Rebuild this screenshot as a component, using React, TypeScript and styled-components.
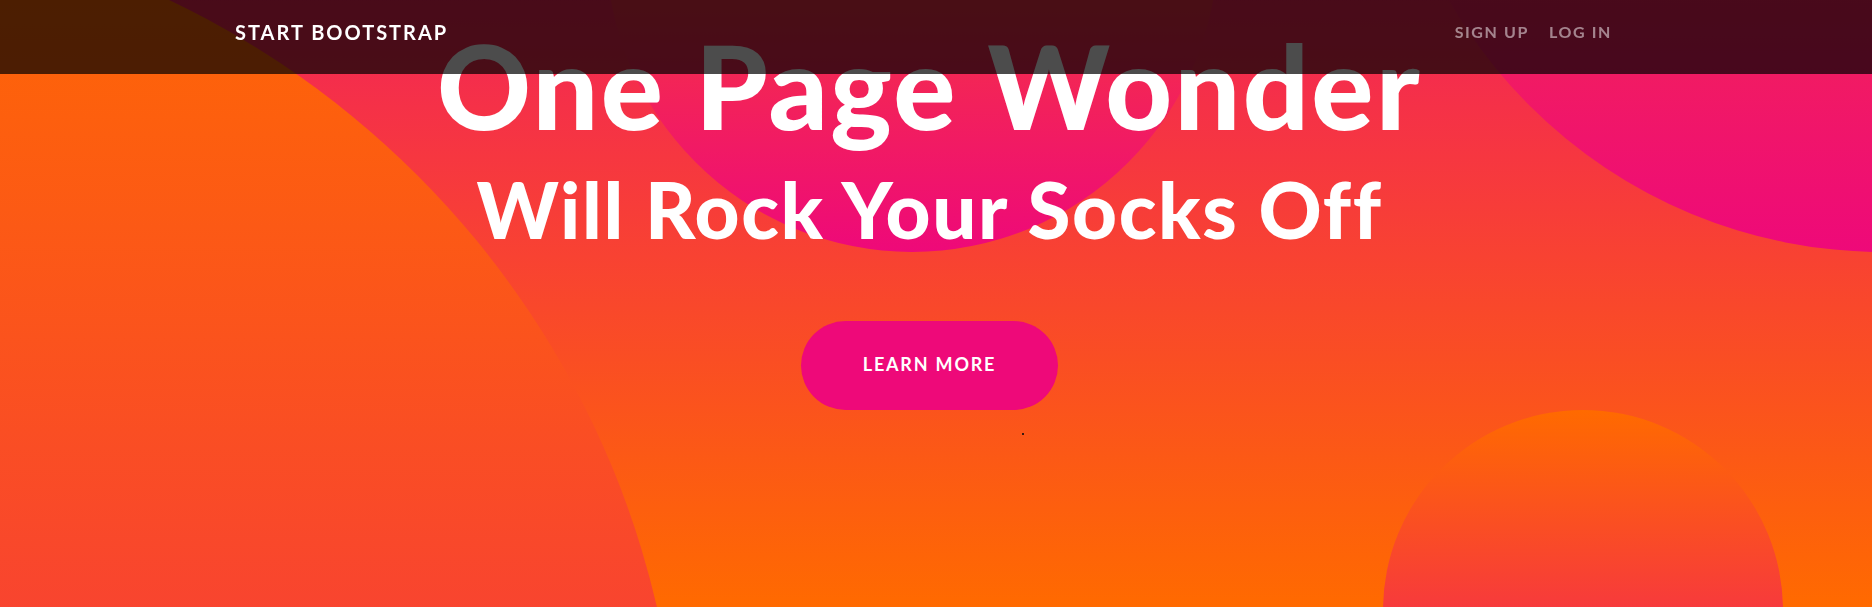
import React from "react";
import styled, { createGlobalStyle } from "styled-components";

const GlobalStyle = createGlobalStyle`
  * { box-sizing: border-box; }
  html, body { margin: 0; padding: 0; background: #fff; }
  body { font-family: Lato, "Liberation Sans", sans-serif; }
`;

const NavBar = styled.nav`
  position: fixed;
  top: 0;
  left: 0;
  right: 0;
  z-index: 10;
  height: 74px;
  background: rgba(0, 0, 0, 0.7);
`;

const NavInner = styled.div`
  height: 64px;
  display: flex;
  align-items: center;
  justify-content: space-between;
  padding: 0 260px 0 235px;
`;

const Brand = styled.a`
  color: #fff;
  font-family: Lato, "Liberation Sans", sans-serif;
  font-weight: 700;
  font-size: 20px;
  line-height: 1;
  letter-spacing: 2px;
  text-transform: uppercase;
  text-decoration: none;
`;

const NavList = styled.ul`
  display: flex;
  gap: 20px;
  list-style: none;
  margin: 0;
  padding: 0;
`;

const NavLink = styled.a`
  display: block;
  color: rgba(255, 255, 255, 0.5);
  font-family: Lato, "Liberation Sans", sans-serif;
  font-weight: 700;
  font-size: 16px;
  line-height: 1;
  letter-spacing: 1.6px;
  text-transform: uppercase;
  text-decoration: none;
  margin-top: -1px;
`;

const Masthead = styled.header`
  position: relative;
  overflow: hidden;
  height: 607px;
  background: linear-gradient(180deg, #ee0979 -40%, #ff6a00 100%);
`;

const Circle = styled.div<{ $x: number; $y: number; $size: number }>`
  position: absolute;
  z-index: 0;
  left: ${(p) => p.$x}px;
  top: ${(p) => p.$y}px;
  width: ${(p) => p.$size}px;
  height: ${(p) => p.$size}px;
  border-radius: 50%;
  background: linear-gradient(0deg, #ee0979 0%, #ff6a00 100%);
`;

const Content = styled.div`
  position: relative;
  z-index: 1;
  display: flex;
  flex-direction: column;
  align-items: center;
  padding: 28px 13px 0 0;
  text-align: center;
  color: #fff;
`;

const Heading = styled.h1`
  margin: 0;
  font-family: Lato, "Liberation Sans", sans-serif;
  font-weight: 900;
  font-size: 116px;
  line-height: 1;
  letter-spacing: 2.4px;
`;

const SubHeading = styled.h2`
  margin: 26px 0 0;
  font-family: Lato, "Liberation Sans", sans-serif;
  font-weight: 900;
  font-size: 78px;
  line-height: 1;
  letter-spacing: 1.6px;
`;

const LearnButton = styled.a`
  margin-top: 73px;
  width: 257px;
  height: 89px;
  padding-bottom: 3px;
  display: flex;
  align-items: center;
  justify-content: center;
  border-radius: 999px;
  background: #ee0979;
  color: #fff;
  font-family: Lato, "Liberation Sans", sans-serif;
  font-weight: 700;
  font-size: 18px;
  letter-spacing: 1.8px;
  text-transform: uppercase;
  text-decoration: none;
`;

const Speck = styled.span`
  position: absolute;
  z-index: 1;
  left: 1022px;
  top: 433px;
  width: 2px;
  height: 2px;
  background: #3a1a10;
`;

const circles = [
  { x: -1112, y: -87, size: 1792 },
  { x: 1383, y: -748, size: 1000 },
  { x: 1383, y: 410, size: 400 },
  { x: 606, y: -360, size: 612 },
];

export default function App() {
  return (
    <>
      <GlobalStyle />
      <NavBar>
        <NavInner>
          <Brand href="#">Start Bootstrap</Brand>
          <NavList>
            <li>
              <NavLink href="#">Sign Up</NavLink>
            </li>
            <li>
              <NavLink href="#">Log In</NavLink>
            </li>
          </NavList>
        </NavInner>
      </NavBar>
      <Masthead>
        {circles.map((c, i) => (
          <Circle key={i} $x={c.x} $y={c.y} $size={c.size} />
        ))}
        <Content>
          <Heading>One Page Wonder</Heading>
          <SubHeading>Will Rock Your Socks Off</SubHeading>
          <LearnButton href="#">Learn More</LearnButton>
        </Content>
        <Speck />
      </Masthead>
    </>
  );
}
